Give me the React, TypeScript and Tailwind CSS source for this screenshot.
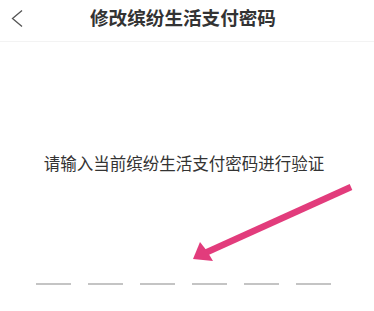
const slots = [0, 1, 2, 3, 4, 5];

export default function App() {
  return (
    <div
      className="relative h-[311px] w-[374px] overflow-hidden bg-white"
      style={{ fontFamily: '"Noto Sans CJK SC", "Noto Sans", sans-serif' }}
    >
      <header className="relative flex h-[42px] items-center justify-center border-b border-[#f3f3f3] pb-[6px] pr-[8px]">
        <svg className="absolute left-[10px] top-[9px]" width="14" height="19" viewBox="0 0 14 19" fill="none">
          <polyline points="12,1.5 2.5,9.5 12,17.5" stroke="#555" strokeWidth="1.3" />
        </svg>
        <h1 className="text-[18.6px] font-semibold leading-none text-[#333]">修改缤纷生活支付密码</h1>
      </header>

      <p className="mt-[111px] pr-[6px] text-center text-[16.5px] leading-5 text-[#333]">请输入当前缤纷生活支付密码进行验证</p>

      <div className="mt-[110px] flex gap-[17px] pl-[36px]">
        {slots.map((i) => (
          <div key={i} className="h-[2px] w-[35px] bg-[#c4c4c4]" />
        ))}
      </div>

      <svg className="pointer-events-none absolute left-0 top-0" width="374" height="311" viewBox="0 0 374 311">
        <line x1="351" y1="187" x2="205" y2="253" stroke="#e23c7c" strokeWidth="6.5" strokeLinecap="butt" />
        <polygon points="193,259 200,242 207,251 213,261" fill="#e23c7c" />
      </svg>
    </div>
  );
}
